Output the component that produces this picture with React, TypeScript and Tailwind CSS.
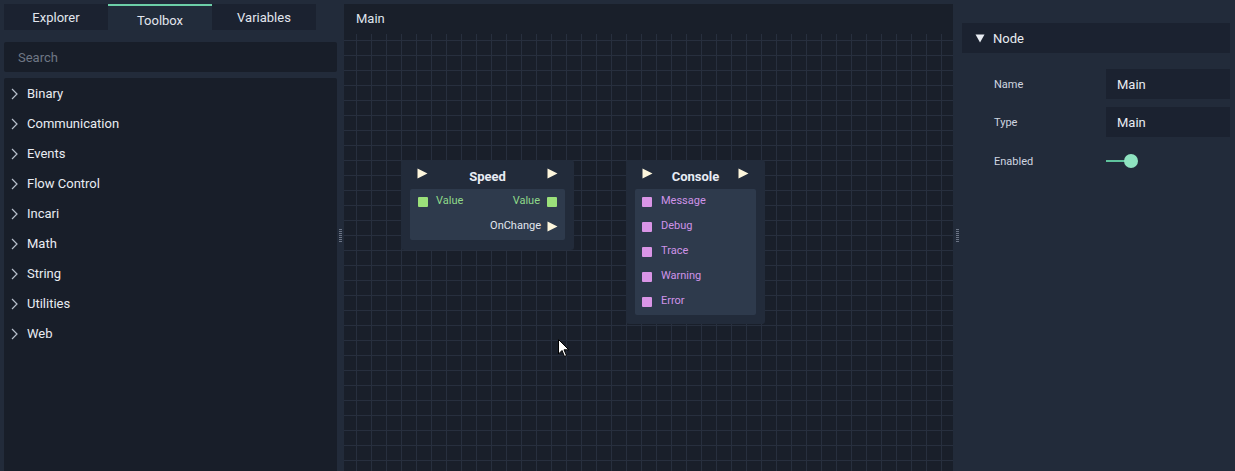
import React from "react";

const categories = [
  "Binary",
  "Communication",
  "Events",
  "Flow Control",
  "Incari",
  "Math",
  "String",
  "Utilities",
  "Web",
];

const Play = ({ className = "" }: { className?: string }) => (
  <svg width="11" height="11" viewBox="0 0 11 11" className={className}>
    <path d="M0.5 0.5 L10.5 5.5 L0.5 10.5 Z" fill="#fdf6dc" />
  </svg>
);

const Pin = ({ color }: { color: string }) => (
  <span className="block w-[10px] h-[10px] rounded-[1px]" style={{ background: color }} />
);

const Grip = () => (
  <div className="flex flex-col gap-[1px]">
    {[0, 1, 2, 3, 4, 5, 6].map((i) => (
      <span key={i} className="block w-[3px] h-[1px] bg-[#6b7485]" />
    ))}
  </div>
);

const Chevron = () => (
  <svg width="7" height="12" viewBox="0 0 7 12" className="shrink-0">
    <path d="M1 1 L6 6 L1 11" fill="none" stroke="#b8c0cc" strokeWidth="1.2" />
  </svg>
);

const SpeedNode = () => (
  <div className="absolute left-[57px] top-[126px] w-[173px] h-[90px] bg-[#222b3a] rounded-[3px] px-[9px] pt-[8px]">
    <div className="flex justify-between h-[20px] px-[7px]">
      <Play />
      <span className="text-[13px] font-bold text-[#e8ecf4] leading-[20px] -mt-[1px]">Speed</span>
      <Play />
    </div>
    <div className="mt-[1px] bg-[#2e3a4c] h-[51px] rounded-[2px] pt-[6px] px-[8px] text-[11px]">
      <div className="flex items-center h-[13px]">
        <Pin color="#9be07a" />
        <span className="ml-[8px] text-[#8fd98a]">Value</span>
        <span className="ml-auto text-[#8fd98a]">Value</span>
        <span className="ml-[7px] flex"><Pin color="#9be07a" /></span>
      </div>
      <div className="flex items-center h-[13px] mt-[12px]">
        <span className="ml-auto text-[#e2e6ee]">OnChange</span>
        <span className="ml-[6px] mr-[-1px] flex"><Play /></span>
      </div>
    </div>
  </div>
);

const ConsoleNode = () => (
  <div className="absolute left-[282px] top-[126px] w-[139px] h-[164px] bg-[#222b3a] rounded-[3px] px-[9px] pt-[8px]">
    <div className="flex justify-between h-[20px] px-[7px]">
      <Play />
      <span className="text-[13px] font-bold text-[#e8ecf4] leading-[20px] -mt-[1px]">Console</span>
      <Play />
    </div>
    <div className="mt-[1px] bg-[#2e3a4c] h-[126px] rounded-[2px] pt-[6px] px-[7px] text-[11px]">
      {["Message", "Debug", "Trace", "Warning", "Error"].map((l, i) => (
        <div key={l} className={`flex items-center h-[13px] ${i > 0 ? "mt-[12px]" : ""}`}>
          <Pin color="#d995e6" />
          <span className="ml-[9px] text-[#cf93e8]">{l}</span>
        </div>
      ))}
    </div>
  </div>
);

export default function App() {
  return (
    <div
      className="w-[1235px] h-[471px] bg-[#222b3a] flex overflow-hidden text-[#e2e6ee]"
      style={{ fontFamily: "Roboto, 'Liberation Sans', sans-serif" }}
    >
      {/* left panel */}
      <div className="w-[337px] shrink-0 flex flex-col pl-[4px] pt-[4px]">
        <div className="flex h-[26px] text-[13px]">
          <div className="w-[104px] bg-[#1b2230] flex items-center justify-center pt-[1px]">Explorer</div>
          <div className="w-[104px] bg-[#222c3b] border-t-2 border-[#6dcfa8] flex items-center justify-center pt-[5px]">
            Toolbox
          </div>
          <div className="w-[104px] bg-[#1b2230] flex items-center justify-center pt-[1px]">Variables</div>
        </div>
        <div className="mt-[12px] h-[30px] bg-[#181e29] rounded-[2px] flex items-center px-[14px] pt-[1px] text-[13px] text-[#6f7785]">
          Search
        </div>
        <div className="mt-[6px] flex-1 bg-[#181e29] rounded-t-[2px] pt-[1px]">
          {categories.map((c) => (
            <div key={c} className="flex items-center h-[30px] pl-[7px] gap-[9px] text-[13px] text-[#e8ecf2]">
              <Chevron />
              <span>{c}</span>
            </div>
          ))}
        </div>
      </div>

      {/* splitter */}
      <div className="w-[7px] shrink-0 flex items-center justify-center">
        <Grip />
      </div>

      {/* canvas */}
      <div className="w-[609px] shrink-0 mt-[4px] bg-[#191f2a] flex flex-col">
        <div className="h-[30px] flex items-center px-[12px] text-[13px] text-[#dfe4ec]">Main</div>
        <div className="relative flex-1 bg-[linear-gradient(to_right,#272f3e_1px,transparent_1px),linear-gradient(to_bottom,#272f3e_1px,transparent_1px)] bg-[size:15px_15px] bg-[position:12px_6px]">
          <SpeedNode />
          <ConsoleNode />
          <svg width="12" height="19" viewBox="0 0 12 19" className="absolute left-[214px] top-[305px]">
            <path d="M0.5 0.5 L0.5 15 L4 11.5 L6.5 17.5 L8.5 16.5 L6 10.8 L10.8 10.8 Z" fill="#fff" stroke="#000" strokeWidth="1" />
          </svg>
        </div>
      </div>

      {/* splitter */}
      <div className="w-[9px] shrink-0 flex items-center justify-center">
        <Grip />
      </div>

      {/* properties */}
      <div className="flex-1 pt-[23px] pr-[5px]">
        <div className="h-[30px] bg-[#1b2230] flex items-center pl-[13px] pt-[1px] text-[13px] text-[#e8ecf2]">
          <svg width="10" height="9" viewBox="0 0 10 9" className="mr-[8px]">
            <path d="M0.5 0.5 L9.5 0.5 L5 8.5 Z" fill="#e8ecf2" />
          </svg>
          Node
        </div>
        <div className="mt-[16px] flex flex-col gap-[8px]">
          {["Name", "Type"].map((l) => (
            <div key={l} className="flex items-center h-[30px]">
              <span className="w-[144px] pl-[32px] pt-[2px] text-[11px] text-[#d0d6e0]">{l}</span>
              <div className="flex-1 h-full bg-[#1b2230] flex items-center pl-[11px] pt-[1px] text-[13px] text-[#e8ecf2]">
                Main
              </div>
            </div>
          ))}
          <div className="flex items-center h-[30px] mt-[1px]">
            <span className="w-[144px] pl-[32px] pt-[2px] text-[11px] text-[#d0d6e0]">Enabled</span>
            <div className="relative w-[34px] h-[14px] flex items-center">
              <span className="block w-[22px] h-[2px] bg-[#5fc39d]" />
              <span className="absolute left-[18px] top-0 w-[14px] h-[14px] rounded-full bg-[#8fe3c0]" />
            </div>
          </div>
        </div>
      </div>
    </div>
  );
}
